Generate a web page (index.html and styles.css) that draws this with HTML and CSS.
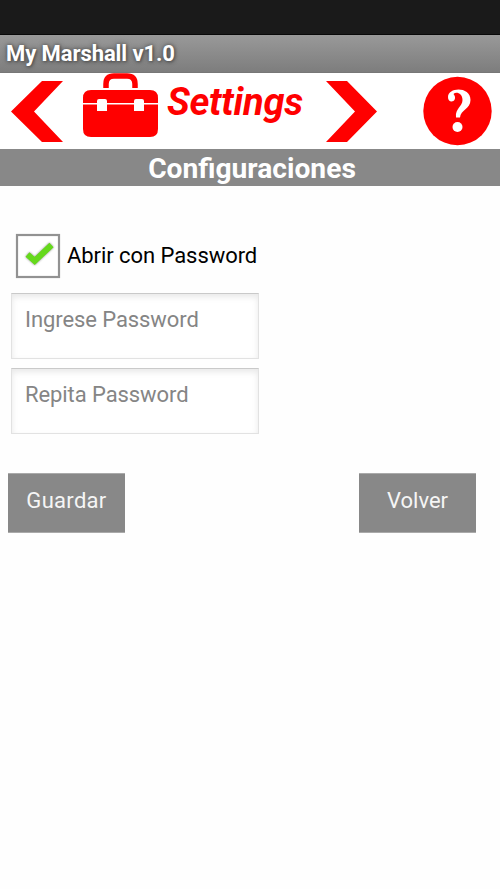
FILE: index.html
```html
<!DOCTYPE html>
<html lang="es">
<head>
<meta charset="utf-8">
<title>My Marshall v1.0</title>
<link rel="stylesheet" href="styles.css">
</head>
<body>
<div class="status-bar"></div>
<header class="app-bar"><span class="app-name">My Marshall v1.0</span></header>
<nav class="nav">
  <svg class="prev" width="52" height="62" viewBox="0 0 52 62"><path d="M31 0H52L23 30.500L52 61H31L0 30.500Z"/></svg>
  <svg class="toolbox" width="76" height="64" viewBox="0 0 76 64">
    <path class="handle" d="M23 15V11Q23 3 31 3H44Q52 3 52 11V15"/>
    <path d="M8 17H67Q75 17 75 25V30H61V28Q61 26 59 26H53Q51 26 51 28V30H24V28Q24 26 22 26H16Q14 26 14 28V30H0V25Q0 17 8 17Z"/>
    <path d="M0 31.500H14V38H24V31.500H51V38H61V31.500H75V56Q75 64 67 64H8Q0 64 0 56Z"/>
  </svg>
  <span class="section">Settings</span>
  <svg class="next" width="52" height="62" viewBox="0 0 52 62"><path d="M0 0H21L51 30.500L21 61H0L29 30.500Z"/></svg>
  <svg class="help" width="70" height="70" viewBox="0 0 70 70">
    <circle cx="34.500" cy="35" r="34.200"/>
    <path class="mark" d="M25 21C25 11 47.500 10 47.500 24C47.500 33 37.500 34 37 41.500H33C32 32 39.500 31 39.500 24C39.500 17 33 15.500 30.500 18C34 22 31 26 28 25.500C26 25 25 23.500 25 21Z"/>
    <circle class="mark" cx="34.500" cy="51" r="5"/>
  </svg>
</nav>
<h1 class="title"><span>Configuraciones</span></h1>
<main class="form">
  <label class="option">
    <svg width="46" height="46" viewBox="0 0 46 46"><rect x="2" y="2" width="42" height="42"/><path d="M12.500 21.500L19.700 28L36.500 12"/></svg>
    <span class="option-text">Abrir con Password</span>
  </label>
  <div class="field"><span class="hint">Ingrese Password</span></div>
  <div class="field"><span class="hint">Repita Password</span></div>
  <div class="actions">
    <button class="button" type="button"><span class="save">Guardar</span></button>
    <button class="button" type="button"><span>Volver</span></button>
  </div>
</main>
</body>
</html>
```
FILE: styles.css
```css
* { box-sizing: border-box; }
body { margin: 0; min-height: 889px; background: #fefefe; font-family: Roboto, sans-serif; color: #000; }
svg { display: block; flex: none; overflow: visible; }
span { white-space: nowrap; }
.status-bar { height: 35px; background: #1a1a1a; border-bottom: 1px solid #090909; }
.app-bar { height: 38px; padding-left: 6px; background: linear-gradient(#999, #7d7d7d); border-bottom: 1px solid #777; }
.app-name { display: block; font-size: 22px; line-height: 37px; letter-spacing: -0.08px; font-weight: 700; color: #fff; text-shadow: 0 0 5px #444, 1px 1px 3px #555; }
.nav { height: 76px; display: flex; align-items: flex-start; background: #fff; fill: #f00; }
.prev { margin: 8px 0 0 11px; }
.toolbox { margin-left: 20px; }
.handle { fill: none; stroke: #f00; stroke-width: 5.5; }
.section { width: 136px; margin-left: 8px; font-size: 38px; line-height: 44px; letter-spacing: -0.25px; padding-top: 7px; font-weight: 700; font-style: italic; color: #f00; }
.next { margin: 8px 0 0 23px; }
.help { margin: 3px 0 0 45px; }
.mark { fill: #fff; }
.title { margin: 0; height: 37px; background: #888; color: #fff; text-align: center; font-size: 28.2px; line-height: 39px; font-weight: 700; padding-left: 4px; }
.form { padding: 46px 0 0 8px; }
.option { display: flex; align-items: center; margin-left: 7px; height: 48px; }
.option rect { fill: #fff; stroke: #929292; stroke-width: 2.2; }
.option path { fill: none; stroke: #65d91b; stroke-width: 6; filter: drop-shadow(0 0 1px #888); }
.option-text { font-size: 22px; letter-spacing: -0.06px; margin: 0 0 2px 6px; }
.field { width: 248px; height: 66px; margin: 0 0 9px 3px; padding: 0 13px; background: #fff; border: 1px solid #e2e2e2; border-top-color: #c9c9c9; box-shadow: inset 0 3px 6px #e8e8e8; }
.option + .field { margin-top: 13px; }
.hint { font-size: 22px; line-height: 51px; letter-spacing: -0.08px; color: #858585; }
.actions { display: flex; justify-content: space-between; width: 468px; margin-top: 39px; }
.button { width: 117px; height: 60px; margin: 0; padding: 0 0 6px; border: 0; border-top: 1px solid #aaa; border-bottom: 1px solid #aaa; background: #888; color: #f5f5f5; font: 22px Roboto, sans-serif; }
.save { letter-spacing: 0.3px; }
```
